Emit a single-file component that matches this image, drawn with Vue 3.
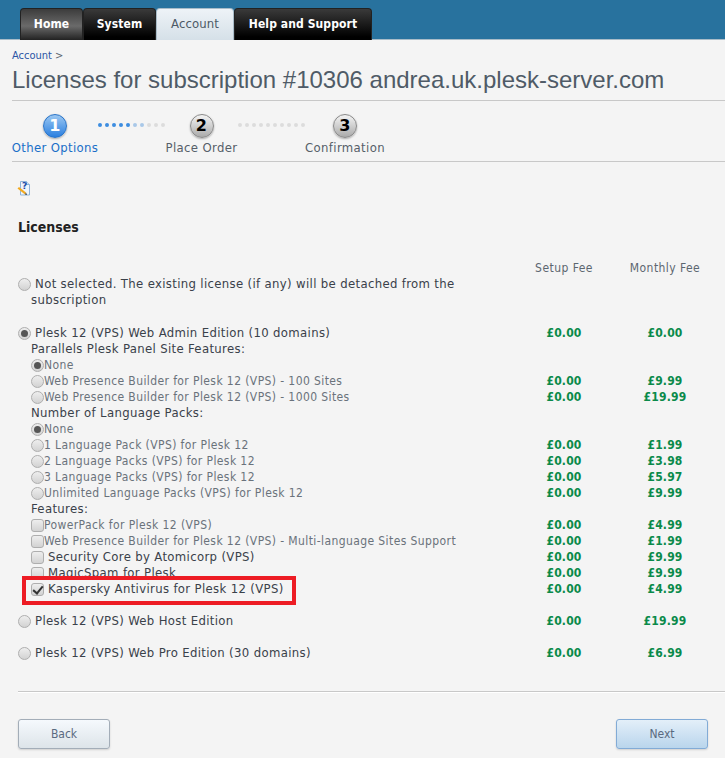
<template>
  <div class="page">
    <header class="topbar">
      <nav class="tabs">
        <a v-for="tab in tabs" :key="tab.name" class="tab" :class="tab.kind">{{ tab.name }}</a>
      </nav>
    </header>

    <main class="content">
      <div class="crumbs"><a>Account</a> <span>&gt;</span></div>
      <h1>Licenses for subscription #10306 andrea.uk.plesk-server.com</h1>

      <div class="steps">
        <div class="step active s1"><span class="num">1</span><span class="label">Other Options</span></div>
        <div class="dots"><i v-for="n in 10" :key="n" :class="{ on: n <= 5, mid: n === 6 || n === 7 }"></i></div>
        <div class="step s2"><span class="num">2</span><span class="label">Place Order</span></div>
        <div class="dots"><i v-for="n in 10" :key="n"></i></div>
        <div class="step s3"><span class="num">3</span><span class="label">Confirmation</span></div>
      </div>

      <div class="help">
        <svg width="14" height="15" viewBox="0 0 14 15">
          <path d="M3.500 .5h6l3 3v10.500h-9z" fill="#eef5fc" stroke="#8fb4d8" />
          <path d="M9.500 .5v3h3" fill="#cfe0f2" stroke="#8fb4d8" />
          <text x="5" y="8" class="q">?</text>
          <path d="M.5 7.500l1.500-1.500 7 5.500-1 2z" fill="#f2a91e" />
          <path d="M8 13.500l1-2 1 2.500z" fill="#333" />
        </svg>
      </div>

      <section class="licenses">
        <h2>Licenses</h2>
        <div class="row head"><span></span><span class="fee">Setup Fee</span><span class="fee">Monthly Fee</span></div>

        <div class="row top">
          <label class="name wrap"><span class="radio"></span> Not selected. The existing license (if any) will be detached from the subscription</label>
        </div>

        <div class="row top gap">
          <label class="name"><span class="radio on"></span> Plesk 12 (VPS) Web Admin Edition (10 domains)</label>
          <span class="fee price">£0.00</span><span class="fee price">£0.00</span>
        </div>

        <div class="subs">
          <div v-for="item in options" :key="item.text" class="row">
            <span v-if="item.type === 'title'" class="group">{{ item.text }}</span>
            <template v-else>
              <label class="name" :class="{ strong: item.strong }">
                <span :class="[item.type, { on: item.on }]"></span>{{ item.text }}
              </label>
              <template v-if="item.setup">
                <span class="fee price">{{ item.setup }}</span><span class="fee price">{{ item.monthly }}</span>
              </template>
            </template>
          </div>
          <div class="marker"></div>
        </div>

        <div class="row top after">
          <label class="name"><span class="radio"></span> Plesk 12 (VPS) Web Host Edition</label>
          <span class="fee price">£0.00</span><span class="fee price">£19.99</span>
        </div>
        <div class="row top after">
          <label class="name"><span class="radio"></span> Plesk 12 (VPS) Web Pro Edition (30 domains)</label>
          <span class="fee price">£0.00</span><span class="fee price">£6.99</span>
        </div>
      </section>

      <footer class="actions">
        <button class="btn">Back</button>
        <button class="btn next">Next</button>
      </footer>
    </main>
  </div>
</template>

<script setup>
const tabs = [
  { name: 'Home', kind: 'home' },
  { name: 'System', kind: 'system' },
  { name: 'Account', kind: 'current' },
  { name: 'Help and Support', kind: 'support' },
]

const options = [
  { type: 'title', text: 'Parallels Plesk Panel Site Features:' },
  { type: 'radio', text: 'None', on: true },
  { type: 'radio', text: 'Web Presence Builder for Plesk 12 (VPS) - 100 Sites', setup: '£0.00', monthly: '£9.99' },
  { type: 'radio', text: 'Web Presence Builder for Plesk 12 (VPS) - 1000 Sites', setup: '£0.00', monthly: '£19.99' },
  { type: 'title', text: 'Number of Language Packs:' },
  { type: 'radio', text: 'None ', on: true },
  { type: 'radio', text: '1 Language Pack (VPS) for Plesk 12', setup: '£0.00', monthly: '£1.99' },
  { type: 'radio', text: '2 Language Packs (VPS) for Plesk 12', setup: '£0.00', monthly: '£3.98' },
  { type: 'radio', text: '3 Language Packs (VPS) for Plesk 12', setup: '£0.00', monthly: '£5.97' },
  { type: 'radio', text: 'Unlimited Language Packs (VPS) for Plesk 12', setup: '£0.00', monthly: '£9.99' },
  { type: 'title', text: 'Features:' },
  { type: 'check', text: 'PowerPack for Plesk 12 (VPS)', setup: '£0.00', monthly: '£4.99' },
  { type: 'check', text: 'Web Presence Builder for Plesk 12 (VPS) - Multi-language Sites Support', setup: '£0.00', monthly: '£1.99' },
  { type: 'check', text: 'Security Core by Atomicorp (VPS)', setup: '£0.00', monthly: '£9.99', strong: true },
  { type: 'check', text: 'MagicSpam for Plesk', setup: '£0.00', monthly: '£9.99', strong: true },
  { type: 'check', text: 'Kaspersky Antivirus for Plesk 12 (VPS)', setup: '£0.00', monthly: '£4.99', strong: true, on: true },
]
</script>

<style>
html,
body {
  margin: 0;
  background: #f4f4f4;
}
</style>

<style scoped>
.page {
  width: 725px;
  height: 758px;
  overflow: hidden;
  background: #f4f4f4;
  color: #5c6670;
  font: 12px/16px "DejaVu Sans Condensed", "DejaVu Sans", sans-serif;
}

.topbar {
  height: 40px;
  box-sizing: border-box;
  padding: 8px 0 0 20px;
  background: #28729e;
  border-bottom: 1px solid #a9bcc8;
}

.tabs {
  display: flex;
  height: 32px;
}

.tab {
  box-sizing: border-box;
  height: 32px;
  padding-top: 7px;
  text-align: center;
  color: #fff;
  font-size: 12px;
  font-weight: 700;
  letter-spacing: 0.1px;
  border: 1px solid #222;
  border-bottom: 0;
  border-radius: 4px 4px 0 0;
  background: linear-gradient(#3a3a3a, #000 90%);
}

.home { width: 63px; background: linear-gradient(#3c3c3c, #6a6a6a 55%, #222); }
.system { width: 73px; }
.current {
  width: 78px;
  color: #4d5a66;
  font-weight: 400;
  font-size: 13px;
  border-color: #a9bcc8;
  background: linear-gradient(#eef3f7, #d5e0e8);
}
.support { width: 138px; }

.content {
  padding: 0 0 0 12px;
}

.crumbs {
  padding-top: 9px;
  font-size: 11px;
  line-height: 14px;
}

.crumbs a { color: #2a55a5; }

h1 {
  margin: 2px 0 0;
  height: 35px;
  border-bottom: 1px solid #c8c8c8;
  font: 400 24px/30px "Liberation Sans", Arial, sans-serif;
  color: #4f5b67;
}

.steps {
  display: flex;
  height: 60px;
  border-bottom: 1px solid #c8c8c8;
}

.step {
  display: flex;
  flex-direction: column;
  align-items: center;
  padding-top: 13px;
  font-size: 13px;
  letter-spacing: 0.35px;
  box-sizing: border-box;
}

.s1 { width: 86px; }
.s2 { width: 73px; }
.s3 { width: 80px; }

.num {
  width: 24px;
  height: 24px;
  border-radius: 50%;
  border: 1px solid #8a8a8a;
  box-sizing: border-box;
  background: linear-gradient(#f4f4f4, #aaa);
  box-shadow: 0 1px 2px rgba(0, 0, 0, 0.3);
  color: #000;
  font: 700 16px/22px "DejaVu Sans", sans-serif;
  text-align: center;
}

.active .num {
  border-color: #2a74c8;
  background: linear-gradient(#9cc8f2, #2a7fe0);
  color: #fff;
}

.label {
  margin-top: 2px;
  line-height: 16px;
  white-space: nowrap;
  color: #565f69;
}

.active .label { color: #1a6fc8; }

.dots {
  display: flex;
  gap: 3.200px;
  width: 67px;
  padding-top: 22px;
  height: 4px;
}

.dots i {
  width: 4px;
  height: 4px;
  border-radius: 50%;
  background: #dcdcdc;
}

.dots i.on { background: #3d8de0; }
.dots i.mid { background: #a9c8e8; }

.help {
  height: 15px;
  margin: 19px 0 0 5px;
}

.help svg { display: block; }

.q {
  font: 700 9px "DejaVu Sans", sans-serif;
  fill: #1d4fa8;
}

.licenses {
  margin-left: 6px;
  padding-top: 21px;
  padding-right: 8px;
}

h2 {
  margin: 0;
  font-size: 14px;
  line-height: 20px;
  color: #222;
  font-weight: 700;
}

.row {
  display: grid;
  grid-template-columns: 1fr 100px 102px;
  min-height: 16px;
}

.head {
  margin-top: 23px;
  letter-spacing: 0.45px;
  position: relative;
  left: -1px;
}

.fee { text-align: center; }

.price {
  color: #0a8a4a;
  font-weight: 700;
  letter-spacing: 0.2px;
  position: relative;
  left: -1px;
}

.gap { margin-top: 17px; }
.after { margin-top: 16px; }

.name {
  white-space: nowrap;
  color: #6a727b;
  letter-spacing: 0.4px;
}

.top .name,
.group,
.name.strong {
  color: #3a414a;
  font-size: 13px;
  letter-spacing: 0.34px;
}

.top .wrap {
  grid-column: 1 / 3;
  width: 440px;
  white-space: normal;
  padding-left: 13px;
  text-indent: -13px;
}

.subs {
  position: relative;
  padding-left: 13px;
}

.radio,
.check {
  display: inline-block;
  vertical-align: -3px;
  width: 13px;
  height: 13px;
  box-sizing: border-box;
  border: 1px solid #aeaeae;
  background: linear-gradient(#eee, #d2d2d2);
  position: relative;
  text-indent: 0;
}

.radio { border-radius: 50%; }
.check { border-radius: 3px; }
.strong .check { margin-right: 4px; }

.radio.on::after {
  content: "";
  position: absolute;
  left: 2px;
  top: 2px;
  width: 7px;
  height: 7px;
  border-radius: 50%;
  background: #555;
}

.check.on::after {
  content: "";
  position: absolute;
  left: 3px;
  top: 0;
  width: 4px;
  height: 8px;
  border: solid #333;
  border-width: 0 2px 2px 0;
  transform: rotate(40deg);
}

.marker {
  position: absolute;
  left: 4px;
  bottom: -8px;
  width: 274px;
  height: 29px;
  box-sizing: border-box;
  border: 4px solid #ed1c24;
}

.actions {
  display: flex;
  justify-content: space-between;
  margin: 30px 0 0 6px;
  padding: 27px 17px 0 0;
  border-top: 1px solid #c8c8c8;
  box-shadow: inset 0 1px 0 #fff;
}

.btn {
  width: 92px;
  height: 30px;
  border: 1px solid #a3adb8;
  border-radius: 3px;
  background: linear-gradient(#f5f9fd, #dde4e9);
  box-shadow: 0 1px 2px rgba(0, 0, 0, 0.15);
  color: #5a6a80;
  font: 12px "DejaVu Sans Condensed", "DejaVu Sans", sans-serif;
}

.next {
  border-color: #82abd6;
  background: linear-gradient(#e3eff9, #b9d5ec);
}
</style>
